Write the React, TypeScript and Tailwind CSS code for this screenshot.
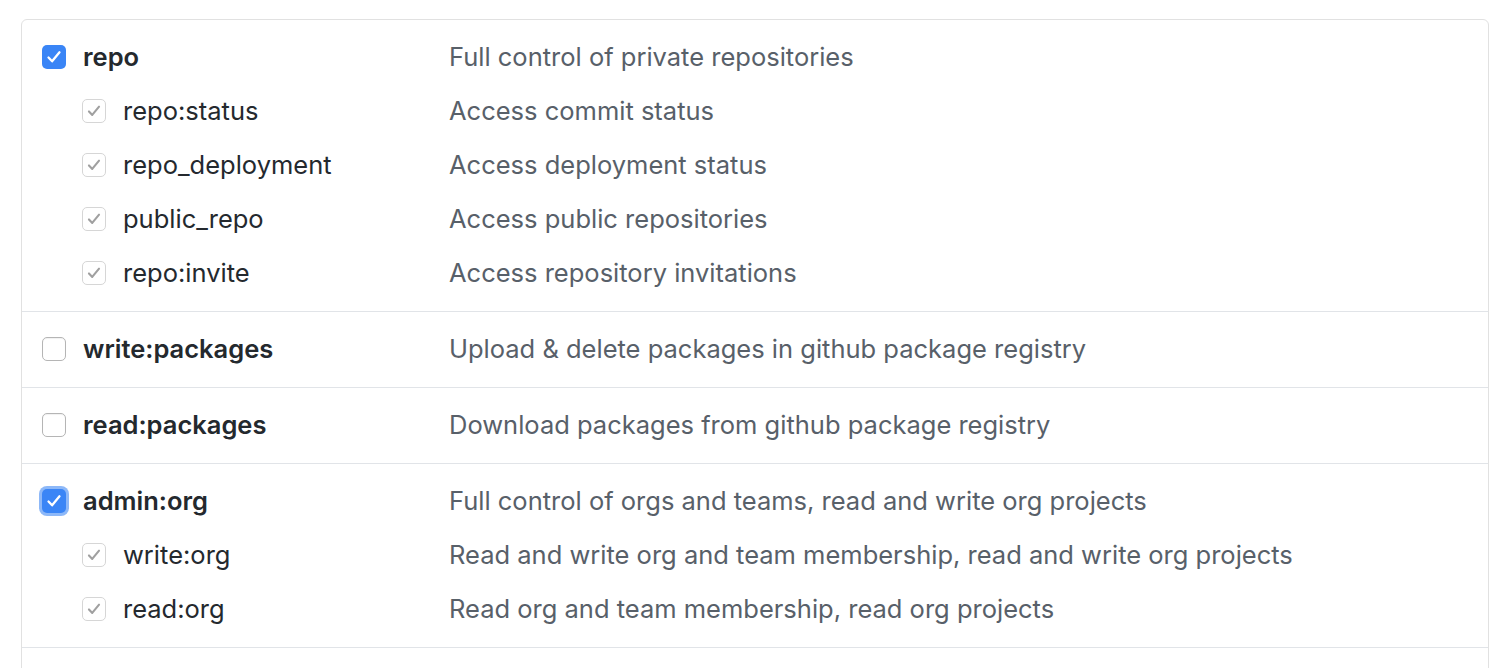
import React from 'react';

type Scope = {
  name: string;
  desc: string;
  state: 'checked' | 'unchecked';
  focused?: boolean;
  children?: { name: string; desc: string }[];
};

const scopes: Scope[] = [
  {
    name: 'repo',
    desc: 'Full control of private repositories',
    state: 'checked',
    children: [
      { name: 'repo:status', desc: 'Access commit status' },
      { name: 'repo_deployment', desc: 'Access deployment status' },
      { name: 'public_repo', desc: 'Access public repositories' },
      { name: 'repo:invite', desc: 'Access repository invitations' },
    ],
  },
  { name: 'write:packages', desc: 'Upload & delete packages in github package registry', state: 'unchecked' },
  { name: 'read:packages', desc: 'Download packages from github package registry', state: 'unchecked' },
  {
    name: 'admin:org',
    desc: 'Full control of orgs and teams, read and write org projects',
    state: 'checked',
    focused: true,
    children: [
      { name: 'write:org', desc: 'Read and write org and team membership, read and write org projects' },
      { name: 'read:org', desc: 'Read org and team membership, read org projects' },
    ],
  },
];

const Check = ({ color }: { color: string }) => (
  <svg viewBox="0 0 24 24" className="w-[24px] h-[24px]" fill="none">
    <path d="M6.5 12.5l3.6 3.8 7.4-9" stroke={color} strokeWidth="2.3" strokeLinecap="round" strokeLinejoin="round" />
  </svg>
);

const MainBox = ({ checked, focused }: { checked: boolean; focused?: boolean }) =>
  checked ? (
    <span
      className={`flex items-center justify-center w-[24px] h-[24px] rounded-[5px] bg-[#3a85f6] shrink-0 ${
        focused ? 'ring-[3px] ring-[#8db8f8]' : ''
      }`}
    >
      <Check color="#ffffff" />
    </span>
  ) : (
    <span className="block w-[24px] h-[24px] rounded-[5px] border border-[#b5b5b5] bg-white shrink-0 shadow-[inset_0_1px_1px_rgba(0,0,0,0.06)]" />
  );

const SubBox = () => (
  <span className="flex items-center justify-center w-[24px] h-[24px] rounded-[5px] border border-[#d6d6d6] bg-white shrink-0">
    <Check color="#a0a0a0" />
  </span>
);

export default function App() {
  return (
    <div
      className="h-screen overflow-hidden bg-white pt-[19px] px-[21px] text-[25.5px]"
      style={{ fontFamily: 'Inter, "Liberation Sans", Arial, sans-serif' }}
    >
      <div className="border border-[#e1e1e1] rounded-[6px] divide-y divide-[#e1e4e8]">
        {scopes.map((s) => (
          <div key={s.name} className="pt-[10px] pb-[11px]">
            <div className="flex items-center h-[54px]">
              <div className="w-[427px] flex items-center gap-[17px] pl-[20px]">
                <MainBox checked={s.state === 'checked'} focused={s.focused} />
                <span className="font-semibold text-[#24292e]">{s.name}</span>
              </div>
              <span className="text-[#586069]">{s.desc}</span>
            </div>
            {s.children?.map((c) => (
              <div key={c.name} className="flex items-center h-[54px]">
                <div className="w-[427px] flex items-center gap-[17px] pl-[60px]">
                  <SubBox />
                  <span className="text-[#24292e]">{c.name}</span>
                </div>
                <span className="text-[#586069]">{c.desc}</span>
              </div>
            ))}
          </div>
        ))}
        <div className="h-[40px]" />
      </div>
    </div>
  );
}
